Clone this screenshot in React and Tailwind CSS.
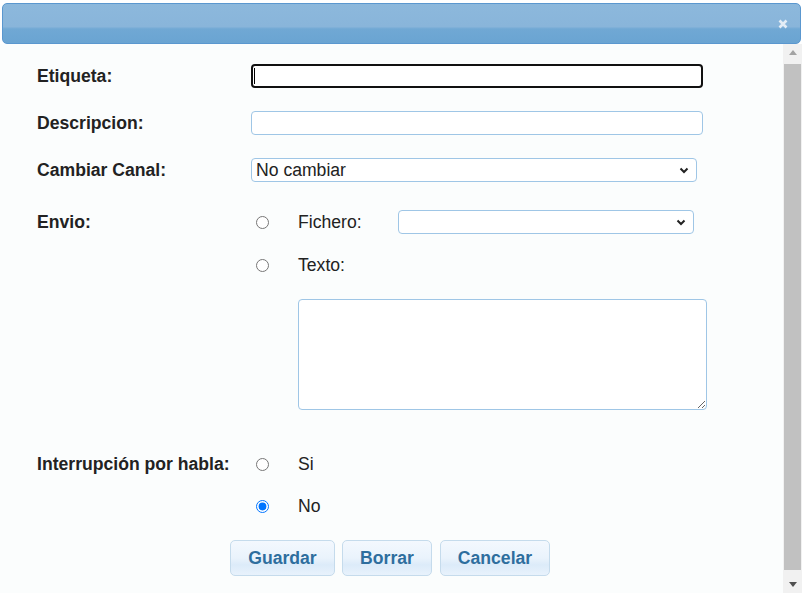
import { useState } from 'react';

const FONT = { fontFamily: '"Liberation Sans", Arial, sans-serif' };

function Chevron() {
  return (
    <svg width="10" height="7" viewBox="0 0 10 7" className="shrink-0">
      <path d="M1.5 1.5 L5 5 L8.5 1.5" fill="none" stroke="#222" strokeWidth="2" />
    </svg>
  );
}

function FakeSelect({ value, className }) {
  return (
    <div
      className={`flex h-[24px] items-center justify-between rounded-[4px] border border-[#9fc6e6] bg-white pl-[4px] pr-[7px] text-[17.6px] leading-[20px] text-[#222] ${className}`}
    >
      <span>{value}</span>
      <Chevron />
    </div>
  );
}

function Radio({ checked, onChange }) {
  return (
    <input
      type="radio"
      checked={checked}
      onChange={onChange}
      className="ml-[5px] h-[13px] w-[13px] shrink-0"
    />
  );
}

function Label({ children }) {
  return <div className="w-[214px] shrink-0 font-bold text-[#222]">{children}</div>;
}

function Btn({ children, className }) {
  return (
    <button
      type="button"
      className={`flex justify-center rounded-[5px] border border-[#c5dbec] bg-[linear-gradient(#f3f8fe_0%,#eaf3fc_50%,#dcebf9_70%,#e8f2fc_100%)] py-[7px] text-[17.6px] font-bold leading-[20px] text-[#2e6e9e] ${className}`}
    >
      {children}
    </button>
  );
}

function Scrollbar() {
  return (
    <div className="flex w-[19px] shrink-0 flex-col bg-[#f1f1f1]">
      <div className="flex h-[17px] items-center justify-center">
        <svg width="8" height="5" viewBox="0 0 8 5">
          <path d="M0 5 L4 0 L8 5 Z" fill="#a3a3a3" />
        </svg>
      </div>
      <div className="flex flex-1 flex-col px-[1px] pb-[6px] pt-[3px]">
        <div className="flex-1 bg-[#c1c1c1]" />
      </div>
      <div className="flex h-[17px] items-center justify-center">
        <svg width="8" height="5" viewBox="0 0 8 5">
          <path d="M0 0 L8 0 L4 5 Z" fill="#505050" />
        </svg>
      </div>
    </div>
  );
}

export default function App() {
  const [envio, setEnvio] = useState(null);
  const [interrupt, setInterrupt] = useState('no');

  return (
    <div className="h-[595px] w-[802px] overflow-hidden bg-white text-[17.6px] leading-[20px]" style={FONT}>
      <div className="flex h-[596px] flex-col pt-[3px]">
        <div className="ml-[2px] mr-[1px] flex h-[41px] shrink-0 items-center justify-end rounded-[5px] border border-[#5a97cf] bg-[linear-gradient(#8cb8dc_0%,#89b5da_58%,#70a8d4_64%,#6aa4d2_100%)] pr-[12px]">
          <svg width="10" height="10" viewBox="0 0 10 10">
            <path d="M1.5 1.5 L8.5 8.5 M8.5 1.5 L1.5 8.5" stroke="#e4edf6" strokeWidth="2.6" />
          </svg>
        </div>

        <div className="flex h-[549px] bg-[#fbfdfd]">
          <div className="flex flex-1 flex-col pt-[20px]">
            <div className="flex h-[24px] items-center pl-[37px]">
              <Label>Etiqueta:</Label>
              <div className="flex h-[24px] w-[452px] items-center rounded-[4px] border-2 border-[#111] bg-white pl-[1px]">
                <div className="h-[16px] w-[1px] bg-black" />
              </div>
            </div>

            <div className="mt-[23px] flex h-[24px] items-center pl-[37px]">
              <Label>Descripcion:</Label>
              <div className="h-[24px] w-[452px] rounded-[4px] border border-[#9fc6e6] bg-white" />
            </div>

            <div className="mt-[23px] flex h-[24px] items-center pl-[37px]">
              <Label>Cambiar Canal:</Label>
              <FakeSelect value="No cambiar" className="w-[446px]" />
            </div>

            <div className="mt-[28px] flex h-[24px] items-center pl-[37px]">
              <Label>Envio:</Label>
              <Radio checked={envio === 'fichero'} onChange={() => setEnvio('fichero')} />
              <span className="ml-[29px] w-[100px] text-[#222]">Fichero:</span>
              <FakeSelect value="" className="w-[296px]" />
            </div>

            <div className="mt-[19px] flex h-[24px] items-center pl-[37px]">
              <div className="w-[214px] shrink-0" />
              <Radio checked={envio === 'texto'} onChange={() => setEnvio('texto')} />
              <span className="ml-[29px] text-[#222]">Texto:</span>
            </div>

            <div className="mt-[22px] pl-[298px]">
              <textarea className="block h-[111px] w-[409px] rounded-[4px] border border-[#9fc6e6] bg-white" />
            </div>

            <div className="mt-[42px] flex h-[24px] items-center pl-[37px]">
              <Label>Interrupción por habla:</Label>
              <Radio checked={interrupt === 'si'} onChange={() => setInterrupt('si')} />
              <span className="ml-[29px] text-[#222]">Si</span>
            </div>

            <div className="mt-[18px] flex h-[24px] items-center pl-[37px]">
              <div className="w-[214px] shrink-0" />
              <Radio checked={interrupt === 'no'} onChange={() => setInterrupt('no')} />
              <span className="ml-[29px] text-[#222]">No</span>
            </div>

            <div className="mt-[22px] flex pl-[230px]">
              <Btn className="w-[105px]">Guardar</Btn>
              <Btn className="ml-[7px] w-[90px]">Borrar</Btn>
              <Btn className="ml-[8px] w-[110px]">Cancelar</Btn>
            </div>
          </div>
          <Scrollbar />
        </div>
      </div>
    </div>
  );
}
